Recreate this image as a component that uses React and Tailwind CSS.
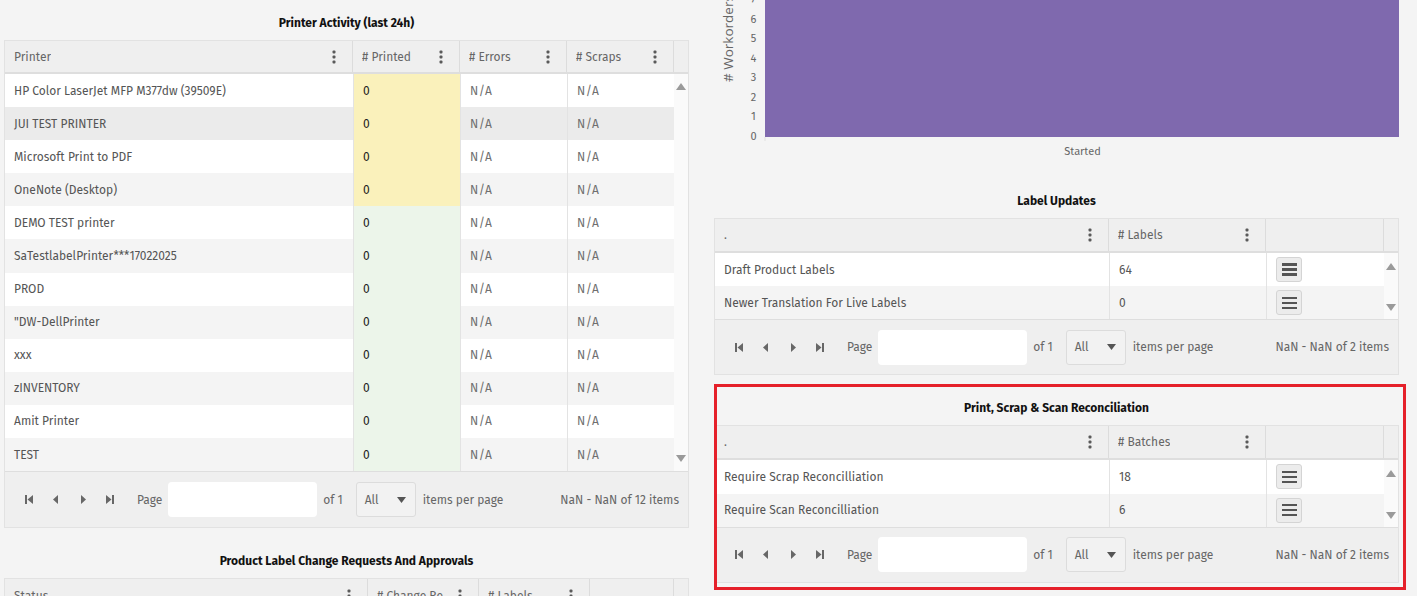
import React from "react";

const Kebab = () => (
  <svg width="4" height="14" viewBox="0 0 4 14" className="shrink-0">
    <rect x="0.5" y="0.5" width="3" height="3" rx="1" fill="#5a5a5a" />
    <rect x="0.5" y="5.5" width="3" height="3" rx="1" fill="#5a5a5a" />
    <rect x="0.5" y="10.5" width="3" height="3" rx="1" fill="#5a5a5a" />
  </svg>
);

const HeadCell = ({ label, kebab = true, last = false }) => (
  <div className={`flex items-center justify-between pl-[9px] pr-[16px] min-w-0 ${last ? "" : "border-r border-[#dcdcdc]"}`}>
    <span className="truncate text-[#666]">{label}</span>
    {kebab && <Kebab />}
  </div>
);

const ScrollCol = ({ upTop, downBottom }) => (
  <div className="w-[16px] bg-[#fafafa] flex flex-col items-center justify-between" style={{ paddingTop: upTop, paddingBottom: downBottom }}>
    <svg width="10" height="7" viewBox="0 0 10 7"><path d="M5 0 L10 7 L0 7 Z" fill="#9a9a9a" /></svg>
    <svg width="10" height="7" viewBox="0 0 10 7"><path d="M0 0 L10 0 L5 7 Z" fill="#9a9a9a" /></svg>
  </div>
);

const PagerIcon = ({ kind }) => {
  const paths = {
    first: <><rect x="0" y="0" width="2" height="9" /><path d="M8 0 L8 9 L2.5 4.5 Z" /></>,
    prev: <path d="M6 0 L6 9 L1 4.5 Z" />,
    next: <path d="M2 0 L2 9 L7 4.5 Z" />,
    last: <><path d="M0 0 L0 9 L5.5 4.5 Z" /><rect x="6" y="0" width="2" height="9" /></>,
  };
  return (
    <div className="w-[27px] flex items-center justify-center">
      <svg width="8" height="9" viewBox="0 0 8 9" fill="#676767">{paths[kind]}</svg>
    </div>
  );
};

const Pager = ({ total, tall = false }) => (
  <div className={`${tall ? "h-[56px]" : "h-[55px]"} bg-[#efefef] border-t border-[#dedede] flex items-center pl-[10px] pr-[9px] text-[#666]`}>
    <PagerIcon kind="first" />
    <PagerIcon kind="prev" />
    <PagerIcon kind="next" />
    <PagerIcon kind="last" />
    <span className="ml-[14px]">Page</span>
    <div className="ml-[6px] w-[149px] h-[35px] bg-white rounded-[4px]" />
    <span className="ml-[6px]">of 1</span>
    <div className="ml-[13px] w-[60px] h-[35px] bg-[#f2f2f2] border border-[#dcdcdc] rounded-[3px] flex items-center justify-between pl-[8px] pr-[9px]">
      <span>All</span>
      <svg width="9" height="6" viewBox="0 0 9 6"><path d="M0 0 L9 0 L4.5 6 Z" fill="#555" /></svg>
    </div>
    <span className="ml-[7px]">items per page</span>
    <span className="ml-auto">{total}</span>
  </div>
);

const Title = ({ children }) => (
  <div className="h-[38px] pt-[4px] flex items-center justify-center font-bold text-[12px] text-[#111]">{children}</div>
);

const printers = [
  "HP Color LaserJet MFP M377dw (39509E)",
  "JUI TEST PRINTER",
  "Microsoft Print to PDF",
  "OneNote (Desktop)",
  "DEMO TEST printer",
  "SaTestlabelPrinter***17022025",
  "PROD",
  "\"DW-DellPrinter",
  "xxx",
  "zINVENTORY",
  "Amit Printer",
  "TEST",
];

const PrinterTable = () => (
  <div className="border border-[#e2e2e2]">
    <div className="grid grid-cols-[348px_107px_107px_107px_16px] h-[33px] bg-[#efefef] border-b-2 border-[#dedede]">
      <HeadCell label="Printer" />
      <HeadCell label="# Printed" />
      <HeadCell label="# Errors" />
      <HeadCell label="# Scraps" />
      <div />
    </div>
    <div className="flex">
      <div className="flex-1">
        {printers.map((p, i) => {
          const rowBg = i === 1 ? "bg-[#ebebeb]" : i % 2 === 0 ? "bg-white" : "bg-[#f4f4f4]";
          const printedBg = i < 4 ? "bg-[#faf1bb]" : "bg-[#ecf5ea]";
          return (
            <div key={i} className={`grid grid-cols-[348px_107px_107px_107px] h-[33.1px] items-stretch ${rowBg}`}>
              <div className="flex items-center pl-[9px] text-[#555] truncate">{p}</div>
              <div className={`flex items-center pl-[9px] text-[#222] border-l border-[#e3e3e3] ${printedBg}`}>0</div>
              <div className="flex items-center pl-[9px] text-[#6f6f6f] tracking-[0.5px] border-l border-[#e3e3e3]">N/A</div>
              <div className="flex items-center pl-[9px] text-[#6f6f6f] tracking-[0.5px] border-l border-[#e3e3e3]">N/A</div>
            </div>
          );
        })}
      </div>
      <ScrollCol upTop="9px" downBottom="9px" />
    </div>
    <Pager total="NaN - NaN of 12 items" tall />
  </div>
);

const MenuBtn = () => (
  <div className="w-[26px] h-[25px] bg-[#ececec] border border-[#d4d4d4] rounded-[3px] flex flex-col items-center justify-center gap-[2.5px]">
    <div className="w-[15px] h-[2.5px] bg-[#555]" />
    <div className="w-[15px] h-[2.5px] bg-[#555]" />
    <div className="w-[15px] h-[2.5px] bg-[#555]" />
  </div>
);

const SmallTable = ({ col, rows, total }) => (
  <div className="border border-[#e2e2e2]">
    <div className="grid grid-cols-[394px_157px_118px_16px] h-[34px] bg-[#efefef] border-b-2 border-[#dedede]">
      <HeadCell label="." />
      <HeadCell label={col} />
      <div className="border-r border-[#dcdcdc]" />
      <div />
    </div>
    <div className="flex">
      <div className="flex-1">
        {rows.map(([name, n], i) => (
          <div key={i} className={`grid grid-cols-[394px_157px_118px] h-[33.2px] ${i % 2 === 0 ? "bg-white" : "bg-[#f4f4f4]"}`}>
            <div className="flex items-center pl-[9px] text-[#555]">{name}</div>
            <div className="flex items-center pl-[9px] text-[#555] border-l border-[#e3e3e3]">{n}</div>
            <div className="flex items-center pl-[9px] border-l border-[#e3e3e3]"><MenuBtn /></div>
          </div>
        ))}
      </div>
      <ScrollCol upTop="10px" downBottom="8px" />
    </div>
    <Pager total={total} />
  </div>
);

const Chart = () => {
  const ticks = [7, 6, 5, 4, 3, 2, 1, 0];
  return (
    <div className="h-[168px]">
      <svg width="685" height="168" viewBox="0 0 685 168">
        <rect x="51" y="-20" width="634" height="157" fill="#7f69ae" />
        <line x1="51" y1="137" x2="51" y2="141" stroke="#e0e0e0" strokeWidth="1" />
        {ticks.map((t) => (
          <text key={t} x="39.5" y={136.5 - t * 19.55} textAnchor="middle" dominantBaseline="central" fontSize="11" fill="#666" fontFamily="'Fira Sans', sans-serif">
            {t}
          </text>
        ))}
        <text x="368.5" y="151" textAnchor="middle" dominantBaseline="central" fontSize="11" fill="#666" fontFamily="'Fira Sans', sans-serif">Started</text>
        <text transform="translate(18.5 82) rotate(-90)" fontSize="13.5" fill="#666" fontFamily="'Open Sans', sans-serif">
          # Workorders
        </text>
      </svg>
    </div>
  );
};

export default function App() {
  return (
    <div className="w-[1417px] h-[596px] overflow-hidden bg-[#f4f4f4] font-[family-name:'Fira_Sans',sans-serif] text-[12px] leading-none">
      <div className="flex pl-[4px] gap-[25px]">
        <div className="w-[685px] flex flex-col pt-[2px] gap-[12px]">
          <div>
            <Title>Printer Activity (last 24h)</Title>
            <PrinterTable />
          </div>
          <div>
            <Title>Product Label Change Requests And Approvals</Title>
            <div className="border border-[#e2e2e2]">
              <div className="grid grid-cols-[363px_111px_111px_84px_16px] h-[34px] bg-[#efefef]">
                <HeadCell label="Status" />
                <HeadCell label="# Change Requests" />
                <HeadCell label="# Labels" />
                <div className="border-r border-[#dcdcdc]" />
                <div />
              </div>
            </div>
          </div>
        </div>
        <div className="w-[685px] flex flex-col gap-[12px]">
          <Chart />
          <div>
            <Title>Label Updates</Title>
            <SmallTable
              col="# Labels"
              rows={[["Draft Product Labels", "64"], ["Newer Translation For Live Labels", "0"]]}
              total="NaN - NaN of 2 items"
            />
          </div>
          <div className="relative">
            <Title>Print, Scrap &amp; Scan Reconciliation</Title>
            <SmallTable
              col="# Batches"
              rows={[["Require Scrap Reconcilliation", "18"], ["Require Scan Reconcilliation", "6"]]}
              total="NaN - NaN of 2 items"
            />
            <div className="absolute top-[-3px] left-0 right-[-7px] bottom-[-7px] border-[3px] border-[#e5202a] pointer-events-none" />
          </div>
        </div>
      </div>
    </div>
  );
}
